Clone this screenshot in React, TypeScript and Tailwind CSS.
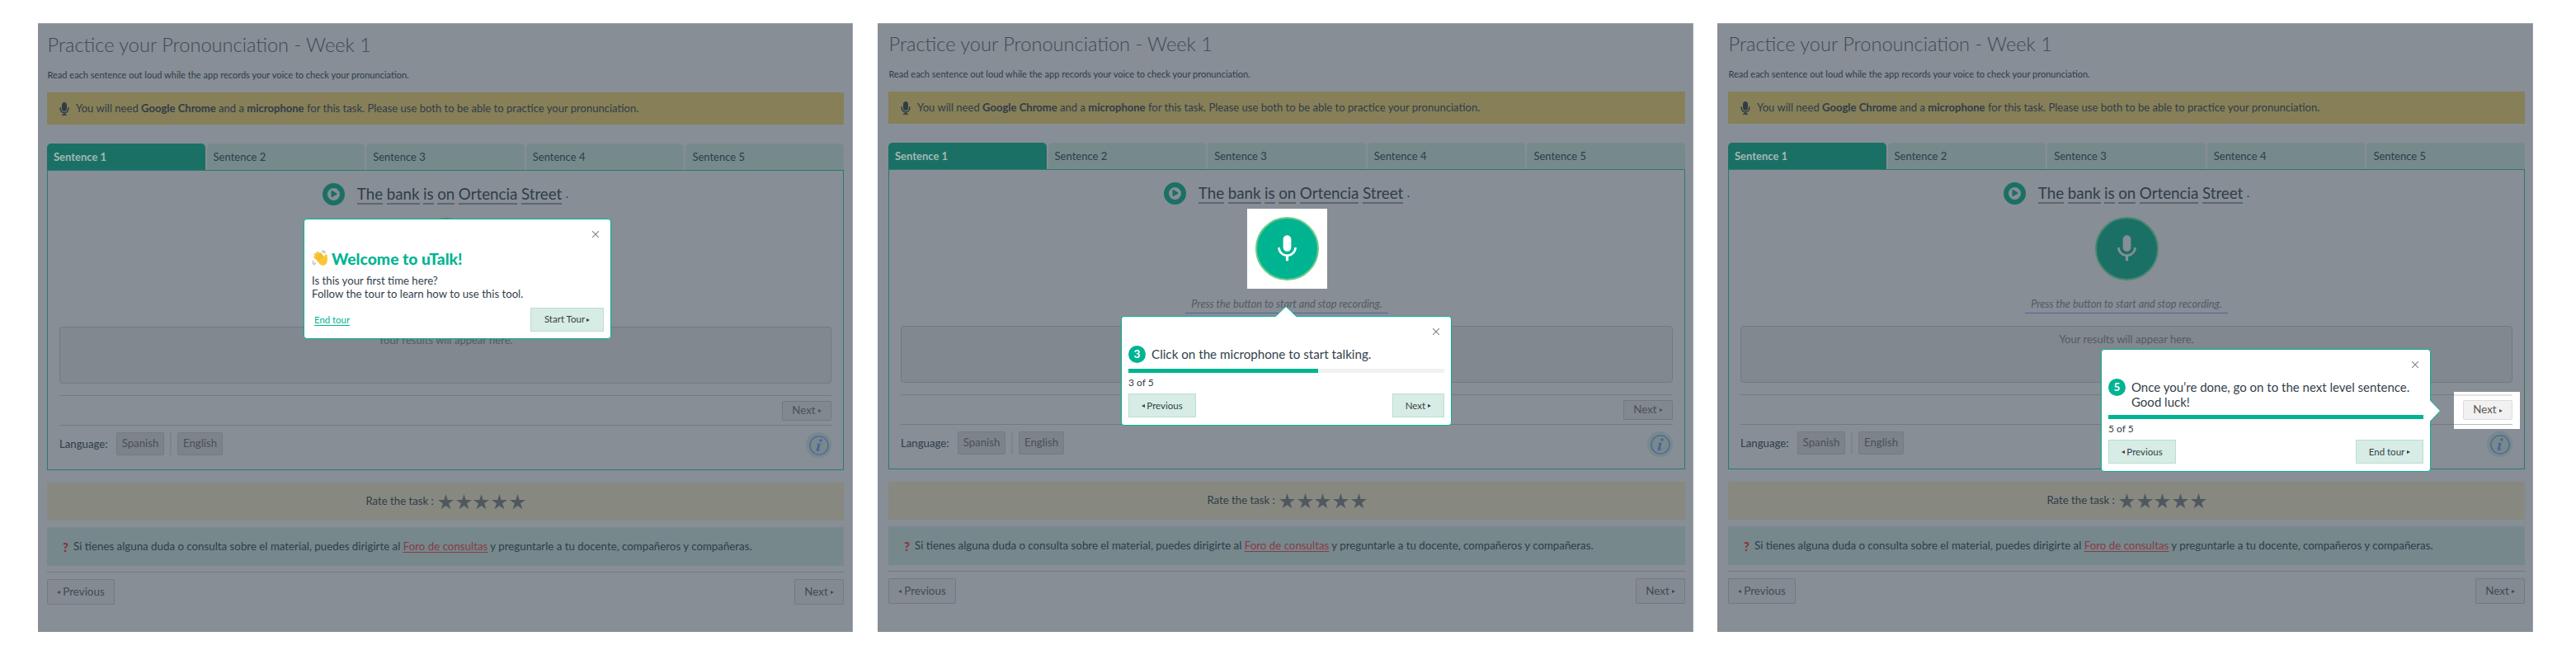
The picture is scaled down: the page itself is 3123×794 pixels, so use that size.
import React from "react";
import { MdMic } from "react-icons/md";
import { FaMicrophone, FaPlay } from "react-icons/fa";

type Step = "welcome" | "mic" | "done";

const line = "border-[#727980]";

function Btn({ children, className }: { children: React.ReactNode; className: string }) {
  return (
    <div className={`flex items-center justify-center border whitespace-nowrap ${className}`}>{children}</div>
  );
}

function Tri({ left = false, className = "" }: { left?: boolean; className?: string }) {
  return (
    <svg viewBox="0 0 4 4" className={`mt-px size-[4px] shrink-0 fill-current ${className}`}>
      <path d={left ? "M4 0L0 2L4 4Z" : "M0 0L4 2L0 4Z"} />
    </svg>
  );
}

function Close() {
  return (
    <svg viewBox="0 0 8 8" className="absolute top-[14px] right-[14px] size-[8px] stroke-[#808589]" strokeWidth="1.1">
      <path d="M0 0L8 8M8 0L0 8" />
    </svg>
  );
}

const tourBtn = "h-[29px] border-[#b9dfd2] bg-[#d6ece5] text-[11.5px] text-[#353f45]";

function Welcome() {
  return (
    <div className="absolute top-[237px] left-[322px] h-[146px] w-[373px] rounded-[4px] border border-[#00b492] bg-white pr-[8px] pl-[9px] text-[#33414c]">
      <Close />
      <div className="mt-[35px] flex h-[24px] items-center gap-[4px] text-[19.34px] font-black text-[#00b492]">
        <svg viewBox="0 0 20 20" className="size-[20px] shrink-0">
          <g stroke="#fcc636" strokeWidth="3" strokeLinecap="round" fill="none">
            <path d="M10 14L3.8 8.600M11.500 12L4.300 5.300M13 10L6.800 3.300M15 11L10.500 4.500" />
          </g>
          <path d="M6 11L13.500 6.500L15.500 8.500L16 5.500Q17.800 4 18.700 6.500L19 11Q19 19.500 12.500 18.800Q10 18 6 13Z" fill="#fcc636" />
          <path d="M5.300 8L10 12.300M6.300 5.300L11.500 10.500M9.300 4.500L13.300 9.300" stroke="#dd9a2c" strokeWidth=".7" fill="none" />
          <path d="M12 1Q14.500 2 14.800 4M13.800 .5Q16 1.500 16.300 3.500M1 13Q2 16 5 17M.5 15.500Q1.500 17.500 3.500 18" stroke="#9aa0a3" strokeWidth="1" fill="none" />
        </svg>
        <span className="whitespace-nowrap">Welcome to uTalk!</span>
      </div>
      <div className="mt-[7px] text-[13.2px] leading-[16.3px]">
        Is this your first time here?
        <br />
        Follow the tour to learn how to use this tool.
      </div>
      <div className="mt-[8px] flex items-center justify-between pl-[3px]">
        <span className="text-[11.4px] text-[#00b492] underline underline-offset-2">End tour</span>
        <Btn className={`${tourBtn} w-[89px]`}>Start Tour<Tri className="ml-[2px]" /></Btn>
      </div>
    </div>
  );
}

function TourStep({ step }: { step: "mic" | "done" }) {
  const mic = step === "mic";
  return (
    <div
      className={`absolute rounded-[4px] border border-[#00b492] bg-white px-[8px] text-[#33414c] ${
        mic ? "top-[355px] left-[295px] h-[133px] w-[401px]" : "top-[395px] left-[465px] h-[149px] w-[400px]"
      }`}
    >
      {mic ? (
        <svg viewBox="0 0 26 14" className="absolute -top-[13px] left-[186px] h-[14px] w-[26px]">
          <path d="M0 14V13L13 .5L26 13V14Z" className="fill-white" />
          <path d="M.5 12.500L13 .5L25.500 12.500" className="fill-none stroke-[#00b492]" />
        </svg>
      ) : (
        <svg viewBox="0 0 14 26" className="absolute top-[61px] -right-[13px] h-[26px] w-[14px]">
          <path d="M0 0H1L13.500 13L1 26H0Z" className="fill-white" />
          <path d="M1.500 .5L13.500 13L1.500 25.500" className="fill-none stroke-[#00b492]" />
        </svg>
      )}
      <Close />
      <div className="mt-[35px] flex gap-[7px]">
        <div className="flex size-[21px] shrink-0 items-center justify-center rounded-full bg-[#00b492] text-[13.5px] font-bold text-white">{mic ? "3" : "5"}</div>
        <div className={mic ? "h-[21px] pt-px text-[15.2px] leading-[18px] whitespace-nowrap" : "pt-px text-[15px] leading-[18px] whitespace-nowrap"}>
          {mic ? "Click on the microphone to start talking." : <>Once you’re done, go on to the next level sentence.<br />Good luck!</>}
        </div>
      </div>
      <div className="mt-[7px] h-[5px] bg-[#f1f1f1]">
        <div className={mic ? "h-full w-3/5 bg-[#00b492]" : "h-full w-full bg-[#00b492]"} />
      </div>
      <div className="mt-[4px] h-[15px] text-[12px] leading-[15px]">{mic ? "3 of 5" : "5 of 5"}</div>
      <div className="mt-[6px] flex justify-between">
        <Btn className={`${tourBtn} w-[82px]`}><Tri left className="mr-[2px]" />Previous</Btn>
        <Btn className={mic ? `${tourBtn} w-[63px]` : `${tourBtn} w-[82px]`}>{mic ? "Next" : "End tour"}<Tri className="ml-[3px]" /></Btn>
      </div>
    </div>
  );
}

function MicButton({ lit = false }: { lit?: boolean }) {
  return (
    <div className={`flex size-[77px] items-center justify-center rounded-full border-2 ${lit ? "border-[#6fcb8b] bg-[#00b492] text-white" : "border-[#488771] bg-[#1b7065] text-[#878e95]"}`}>
      <MdMic className="size-[39px]" />
    </div>
  );
}

const frames: Record<Step, string> = {
  welcome: "w-[988px] pt-[17px] pr-[11px] pl-[11px]",
  mic: "ml-[30px] w-[989px] pt-[16px] pr-[10px] pl-[13px]",
  done: "ml-[29px] w-[989px] pt-[16px] pr-[10px] pl-[13px]",
};

function Panel({ step }: { step: Step }) {
  return (
    <section className={`relative h-[738px] shrink-0 bg-[#878e95] text-[13px] text-[#2f3d49] shadow-[inset_-1px_1px_#9ca2a7] ${frames[step]}`}>
      <h1 className="ml-[0.5px] h-[30px] text-[23.6px] leading-[18px] font-light whitespace-nowrap text-[#3d4a55]">Practice your Pronounciation - Week 1</h1>
      <p className="mt-[6px] ml-[0.5px] h-[20px] text-[11.03px] leading-[20px] whitespace-nowrap">Read each sentence out loud while the app records your voice to check your pronunciation.</p>
      <div className="mt-[11px] flex h-[39px] items-center bg-[#877f58] pl-[13px] text-[13.06px]">
        <FaMicrophone className="size-[16px]" />
        <span className="ml-[6px] pt-[1px] whitespace-pre">You will need <b>Google Chrome</b> and a <b>microphone</b> for this task. Please use both to be able to practice your pronunciation.</span>
      </div>
      <div className="mt-[23px] grid h-[32px] grid-cols-5 gap-[2px]">
        {[1, 2, 3, 4, 5].map((n) => (
          <div key={n} className={`flex items-center rounded-t-[5px] pt-px pl-[8px] ${n === 1 ? "bg-[#1b7065] font-bold text-[#a3b9b6]" : "bg-[#768a8c]"}`}>Sentence {n}</div>
        ))}
      </div>
      <div className="h-[364px] border border-[#2a7a70] px-[14px] pt-[14px]">
        <div className="flex h-[28px] items-center justify-center">
          <div className="flex size-[27px] items-center justify-center rounded-full border-[6px] border-[#1b7065] text-[#1b7065]">
            <FaPlay className="ml-[1px] size-[8px]" />
          </div>
          <div className="ml-[15px] flex gap-[4.5px] text-[18.8px] leading-[30px]">
            {["The", "bank", "is", "on", "Ortencia", "Street"].map((w) => (
              <span key={w} className="h-[28px] border-b-2 border-[#5d666f]">{w}</span>
            ))}
            <span className="text-[14px]">.</span>
          </div>
        </div>
        <div className="mt-[15px] flex justify-center"><MicButton /></div>
        <div className="mt-[16px] flex justify-center">
          <div className="h-[24px] w-[246px] border-b border-[#5460a0] text-center text-[12.75px] leading-[24px] whitespace-nowrap text-[#535a61] italic">Press the button to start and stop recording.</div>
        </div>
        <div className={`mt-[15px] h-[69px] rounded-[4px] border ${line} bg-[#81888f] pt-[5px] text-center leading-[20px] text-[#555b61]`}>Your results will appear here.</div>
        <div className={`mt-[14px] flex h-[37px] items-center justify-end border-y ${line}`}>
          <Btn className={`${line} h-[24px] w-[60px] rounded-[2px] bg-[#81888f] text-[13.3px] text-[#4b5157]`}>Next<Tri className="ml-[3px]" /></Btn>
        </div>
        <div className="mt-[8px] flex h-[31px] items-start text-[13.2px]">
          <span className="w-[69px] leading-[29px]">Language:</span>
          <Btn className="h-[28px] w-[58px] rounded-[2px] border-[#747b83] bg-[#7c838a] text-[#4b5157]">Spanish</Btn>
          <div className="mr-[7px] ml-[7px] h-[28px] w-[2px] bg-[#7d848b]" />
          <Btn className="h-[28px] w-[55px] rounded-[2px] border-[#747b83] bg-[#7c838a] text-[#4b5157]">English</Btn>
          <div className="ml-auto flex size-[31px] items-center justify-center rounded-full bg-[#76898b]">
            <svg viewBox="0 0 24 24" className="size-[24px]">
              <circle cx="12" cy="12" r="11.100" fill="none" stroke="#5460a0" strokeWidth="1.300" />
              <circle cx="14" cy="5.900" r="1.700" fill="#505c9c" />
              <path d="M9.200 10.200L13.700 9.500L11.600 17Q11.400 18 12.200 17.600L13.500 16.300L13.900 16.600Q11.900 19.300 9.900 19.200Q8.400 19 8.900 17L10.500 11.500Q10.700 10.600 9.200 10.700Z" fill="#505c9c" />
            </svg>
          </div>
        </div>
      </div>
      <div className="mt-[15px] flex h-[46px] items-center justify-center bg-[#878981] text-[13.2px]">
        Rate the task :
        <span className="ml-[5px] flex gap-[2.7px] text-[#50585f]">
          {[0, 1, 2, 3, 4].map((n) => (
            <svg key={n} viewBox="0 0 20 20" className="size-[19px] fill-current"><path d="M10 0L12.300 7.400H20L13.800 11.900L16.200 19.300L10 14.800L3.800 19.300L6.200 11.900L0 7.400H7.700Z" /></svg>
          ))}
        </span>
      </div>
      <div className="mt-[8px] flex h-[47px] items-center bg-[#76888b] pt-px pl-[19px] text-[13.31px] whitespace-pre">
        <b className="w-[13px] shrink-0 text-[15px] leading-[18px] font-black text-[#8f2f3a]">?</b>
        <span>Si tienes alguna duda o consulta sobre el material, puedes dirigirte al <span className="text-[#8a3a48] underline underline-offset-2">Foro de consultas</span> y preguntarle a tu docente, compañeros y compañeras.</span>
      </div>
      <div className={`mt-[7px] flex justify-between border-t ${line} pt-[8px] text-[13.4px]`}>
        <Btn className={`${line} h-[31px] w-[82px] rounded-[2px] bg-[#838a91] text-[#424a51]`}><Tri left className="mr-[3px]" />Previous</Btn>
        <Btn className={`${line} h-[31px] w-[60px] rounded-[2px] bg-[#838a91] text-[#424a51]`}>Next<Tri className="ml-[3px]" /></Btn>
      </div>
      {step === "mic" && (
        <div className="absolute top-[225px] left-[448px] flex size-[97px] items-center justify-center bg-white"><MicButton lit /></div>
      )}
      {step === "done" && (
        <div className="absolute top-[447px] left-[893px] h-[45px] w-[80px] bg-white pt-[3px] pr-[9px]">
          <div className="flex h-[37px] justify-end border-t-2 border-b border-t-[#e4e4e7] border-b-[#b9bbbd] pt-[5px]">
            <Btn className="h-[24px] w-[60px] rounded-[2px] border-[#dcdcdc] bg-[#f1f1f1] text-[13.3px] text-[#555555]">Next<Tri className="ml-[3px]" /></Btn>
          </div>
        </div>
      )}
      {step === "welcome" ? <Welcome /> : <TourStep step={step} />}
    </section>
  );
}

export default function App() {
  return (
    <main className="flex h-[794px] w-[3123px] bg-white pt-[28px] pl-[46px] font-[Lato,sans-serif]">
      <Panel step="welcome" />
      <Panel step="mic" />
      <Panel step="done" />
    </main>
  );
}
